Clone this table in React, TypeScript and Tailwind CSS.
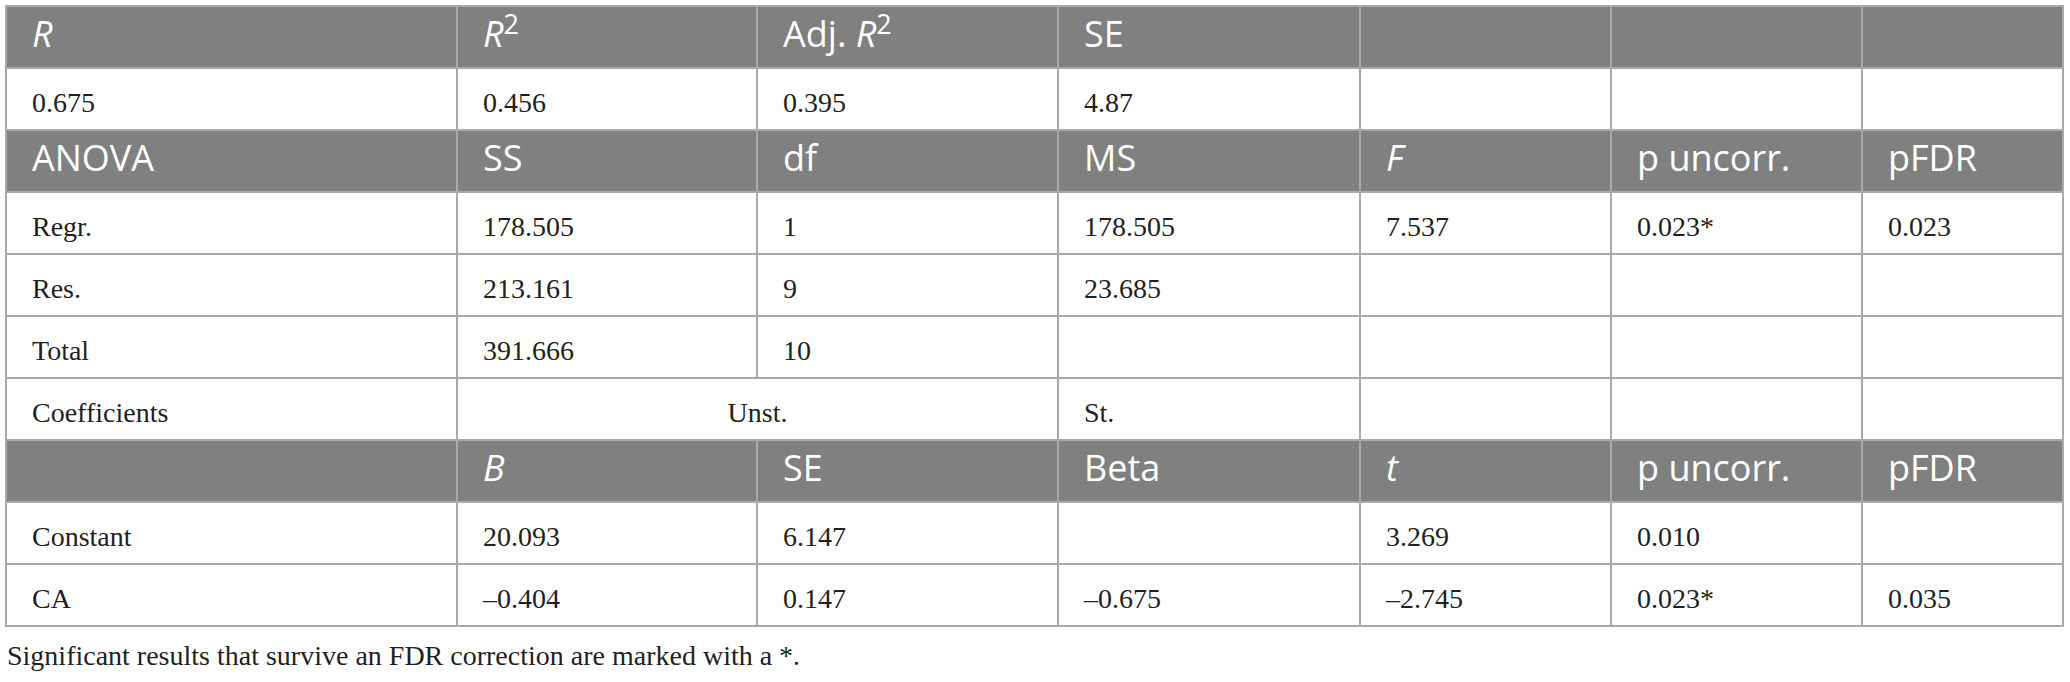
type Cell = string | React.ReactNode;

const head = "h-[62px] border-2 border-[#a9a9a9] bg-[#808080] px-[25px] pb-[6px] text-left align-middle font-['Open_Sans',sans-serif] text-[36px] font-normal text-white";
const body = "h-[62px] border-2 border-[#a9a9a9] bg-white px-[25px] pt-[8px] text-left align-middle font-['Liberation_Serif',serif] text-[28px] text-[#231f20]";

const widths = ["w-[451px]", "w-[300px]", "w-[301px]", "w-[302px]", "w-[251px]", "w-[251px]", "w-[201px]"];

function HeadRow({ cells }: { cells: Cell[] }) {
  return (
    <tr>
      {cells.map((c, i) => (
        <th key={i} className={head}>
          {c}
        </th>
      ))}
    </tr>
  );
}

function BodyRow({ cells }: { cells: Cell[] }) {
  return (
    <tr>
      {cells.map((c, i) => (
        <td key={i} className={body}>
          {c}
        </td>
      ))}
    </tr>
  );
}

export default function App() {
  return (
    <div className="min-h-[682px] w-[2070px] bg-white">
      <table className="ml-[5px] mt-[5px] w-[2059px] table-fixed border-collapse border-2 border-[#a9a9a9]">
        <colgroup>
          {widths.map((w, i) => (
            <col key={i} className={w} />
          ))}
        </colgroup>
        <tbody>
          <HeadRow
            cells={[
              <i>R</i>,
              <>
                <i>R</i>
                <sup>2</sup>
              </>,
              <>
                Adj. <i>R</i>
                <sup>2</sup>
              </>,
              "SE",
              "",
              "",
              "",
            ]}
          />
          <BodyRow cells={["0.675", "0.456", "0.395", "4.87", "", "", ""]} />
          <HeadRow cells={["ANOVA", "SS", "df", "MS", <i>F</i>, "p uncorr.", "pFDR"]} />
          <BodyRow cells={["Regr.", "178.505", "1", "178.505", "7.537", "0.023*", "0.023"]} />
          <BodyRow cells={["Res.", "213.161", "9", "23.685", "", "", ""]} />
          <BodyRow cells={["Total", "391.666", "10", "", "", "", ""]} />
          <tr>
            <td className={body}>Coefficients</td>
            <td colSpan={2} className={body}>
              <span className="block text-center">Unst.</span>
            </td>
            <td className={body}>St.</td>
            <td className={body}></td>
            <td className={body}></td>
            <td className={body}></td>
          </tr>
          <HeadRow cells={["", <i>B</i>, "SE", "Beta", <i>t</i>, "p uncorr.", "pFDR"]} />
          <BodyRow cells={["Constant", "20.093", "6.147", "", "3.269", "0.010", ""]} />
          <BodyRow cells={["CA", "–0.404", "0.147", "–0.675", "–2.745", "0.023*", "0.035"]} />
        </tbody>
      </table>
      <p className="ml-[7px] mt-[8px] font-['Liberation_Serif',serif] text-[28px] text-[#231f20]">
        Significant results that survive an FDR correction are marked with a *.
      </p>
    </div>
  );
}
